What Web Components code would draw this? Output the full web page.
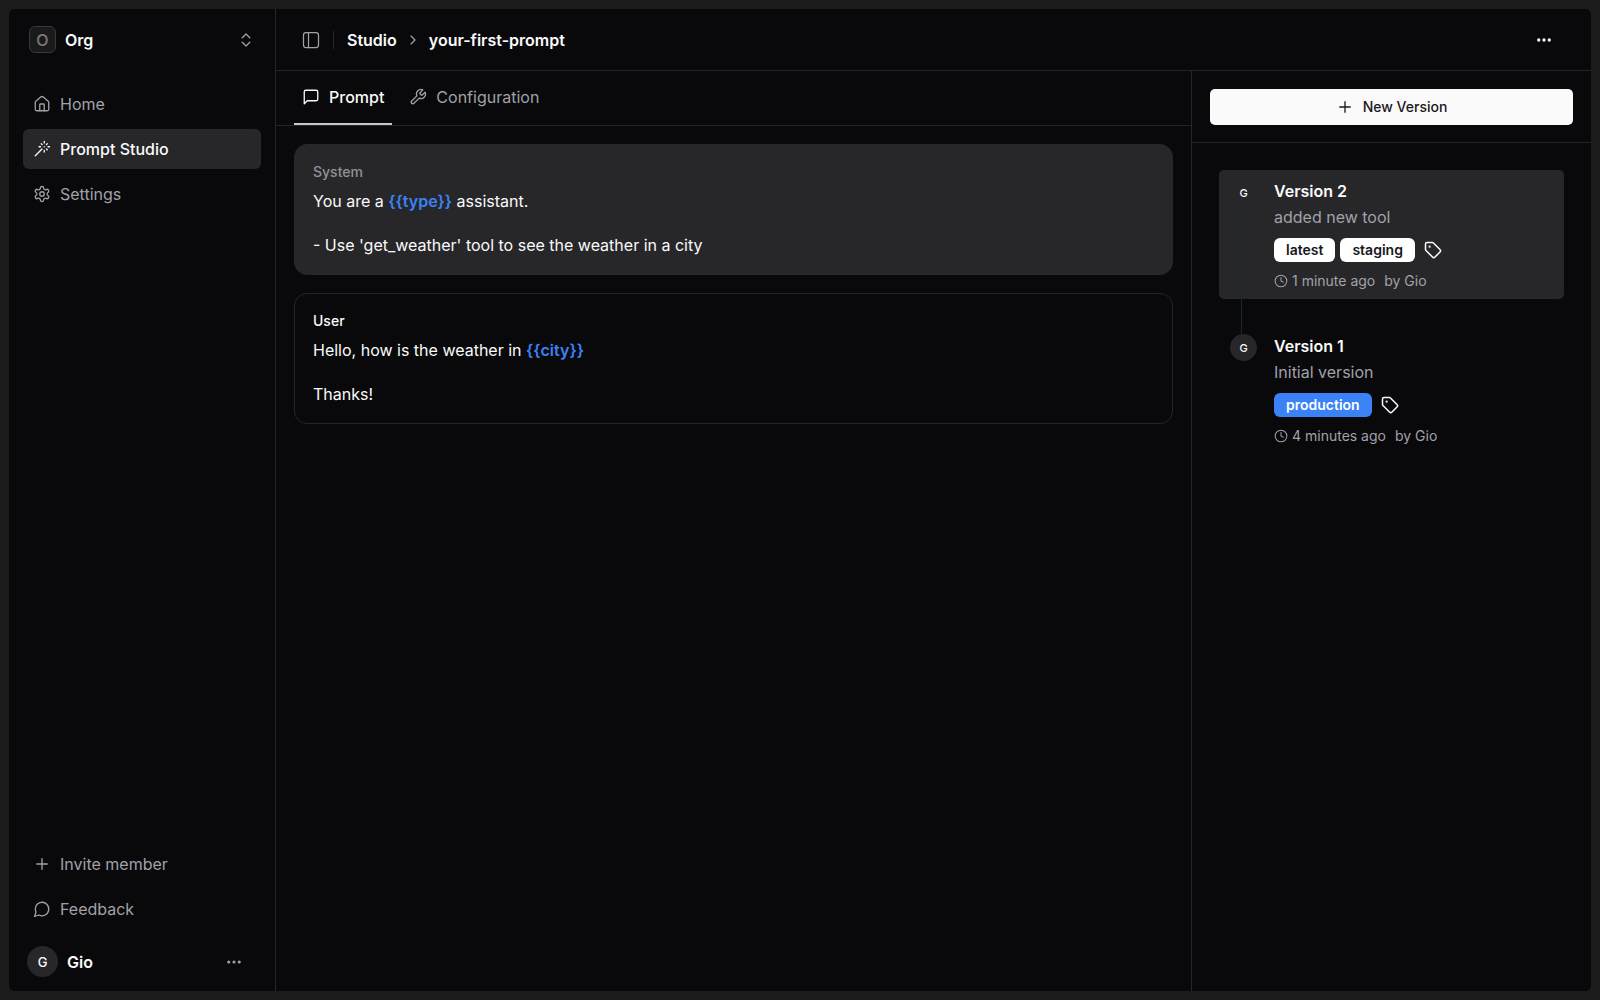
<!DOCTYPE html>
<html lang="en">
<head>
<meta charset="utf-8">
<title>your-first-prompt</title>
<style>
  :root {
    --bg: #09090b;
    --line: #252528;
    --raised: #27272a;
    --text: #fafafa;
    --muted: #a1a1aa;
    --blue: #3b82f6;
  }
  body {
    margin: 0;
    background: #1b1b1b;
    color: var(--text);
    font: 16px/22px Inter, "Liberation Sans", sans-serif;
  }
</style>
</head>
<body>

<studio-app>
  <side-bar slot="sidebar">
    <nav-link icon="home">Home</nav-link>
    <nav-link icon="wand" active>Prompt Studio</nav-link>
    <nav-link icon="settings">Settings</nav-link>
    <nav-link slot="bottom" icon="plus">Invite member</nav-link>
    <nav-link slot="bottom" icon="bubble">Feedback</nav-link>
  </side-bar>
  <page-header slot="header"></page-header>
  <tab-bar slot="main">
    <tab-item icon="message" active>Prompt</tab-item>
    <tab-item icon="wrench">Configuration</tab-item>
  </tab-bar>
  <message-list slot="main">
    <prompt-message role-name="System" filled>
      <p>You are a <prompt-var>type</prompt-var> assistant.</p>
      <p>- Use 'get_weather' tool to see the weather in a city</p>
    </prompt-message>
    <prompt-message role-name="User">
      <p>Hello, how is the weather in <prompt-var>city</prompt-var></p>
      <p>Thanks!</p>
    </prompt-message>
  </message-list>
  <version-panel slot="versions">
    <version-item name="Version 2" time="1 minute ago" author="Gio" active linked>
      added new tool
      <version-badge slot="badges">latest</version-badge>
      <version-badge slot="badges">staging</version-badge>
    </version-item>
    <version-item name="Version 1" time="4 minutes ago" author="Gio">
      Initial version
      <version-badge slot="badges" live>production</version-badge>
    </version-item>
  </version-panel>
</studio-app>

<script>
const icons = {
  home: '<path d="M15 21v-8a1 1 0 0 0-1-1h-4a1 1 0 0 0-1 1v8"/><path d="M3 10a2 2 0 0 1 .709-1.528l7-5.999a2 2 0 0 1 2.582 0l7 5.999A2 2 0 0 1 21 10v9a2 2 0 0 1-2 2H5a2 2 0 0 1-2-2z"/>',
  wand: '<path d="M15 4V2M15 16v-2M8 9h2M20 9h2M17.8 11.8 19 13M15 9h.01M17.8 6.2 19 5M3 21l9-9M12.2 6.2 11 5"/>',
  settings: '<path d="M12.22 2h-.44a2 2 0 0 0-2 2v.18a2 2 0 0 1-1 1.73l-.43.25a2 2 0 0 1-2 0l-.15-.08a2 2 0 0 0-2.73.73l-.22.38a2 2 0 0 0 .73 2.73l.15.1a2 2 0 0 1 1 1.72v.51a2 2 0 0 1-1 1.74l-.15.09a2 2 0 0 0-.73 2.73l.22.38a2 2 0 0 0 2.73.73l.15-.08a2 2 0 0 1 2 0l.43.25a2 2 0 0 1 1 1.73V20a2 2 0 0 0 2 2h.44a2 2 0 0 0 2-2v-.18a2 2 0 0 1 1-1.73l.43-.25a2 2 0 0 1 2 0l.15.08a2 2 0 0 0 2.73-.73l.22-.39a2 2 0 0 0-.73-2.73l-.15-.08a2 2 0 0 1-1-1.74v-.5a2 2 0 0 1 1-1.74l.15-.09a2 2 0 0 0 .73-2.73l-.22-.38a2 2 0 0 0-2.73-.73l-.15.08a2 2 0 0 1-2 0l-.43-.25a2 2 0 0 1-1-1.73V4a2 2 0 0 0-2-2z"/><circle cx="12" cy="12" r="3"/>',
  plus: '<path d="M5 12h14M12 5v14"/>',
  bubble: '<path d="M7.9 20A9 9 0 1 0 4 16.1L2 22Z"/>',
  message: '<path d="M21 15a2 2 0 0 1-2 2H7l-4 4V5a2 2 0 0 1 2-2h14a2 2 0 0 1 2 2z"/>',
  wrench: '<path d="M14.7 6.3a1 1 0 0 0 0 1.4l1.6 1.6a1 1 0 0 0 1.4 0l3.77-3.77a6 6 0 0 1-7.94 7.94l-6.91 6.91a2.12 2.12 0 0 1-3-3l6.91-6.91a6 6 0 0 1 7.94-7.94l-3.76 3.76z"/>',
  panel: '<rect x="3" y="3" width="18" height="18" rx="3"/><path d="M9 3v18"/>',
  chevron: '<path d="m9 18 6-6-6-6"/>',
  updown: '<path d="m7 15 5 5 5-5M7 9l5-5 5 5"/>',
  dots: '<g fill="currentColor"><circle cx="5" cy="12" r="1.2"/><circle cx="12" cy="12" r="1.2"/><circle cx="19" cy="12" r="1.2"/></g>',
  tag: '<path d="M12.586 2.586A2 2 0 0 0 11.172 2H4a2 2 0 0 0-2 2v7.172a2 2 0 0 0 .586 1.414l8.704 8.704a2.426 2.426 0 0 0 3.42 0l6.58-6.58a2.426 2.426 0 0 0 0-3.42z"/><circle cx="7.5" cy="7.5" r=".5" fill="currentColor"/>',
  clock: '<circle cx="12" cy="12" r="10"/><path d="M12 6v6l4 2"/>'
};

// shared by every element that holds a button or a link
const reset = `
  :host, * { box-sizing: border-box; }
  button, a {
    margin: 0; padding: 0; border: 0; background: none;
    color: inherit; font: inherit; text-decoration: none; cursor: pointer;
  }
  button { display: flex; align-items: center; }
`;

function define(name, css, html) {
  customElements.define(name, class extends HTMLElement {
    constructor() {
      super();
      this.attachShadow({ mode: 'open' });
    }
    connectedCallback() {
      this.shadowRoot.innerHTML = `<style>${reset}${css}</style>${html(this)}`;
    }
  });
}

define('app-icon', `
  :host { display: block; flex: none; width: 18px; height: 18px; }
  :host([size="14"]) { width: 14px; height: 14px; }
  :host([size="16"]) { width: 16px; height: 16px; }
  :host([size="20"]) { width: 20px; height: 20px; }
  svg { display: block; width: 100%; height: 100%; }
`, el => `<svg viewBox="0 0 24 24" fill="none" stroke="currentColor" stroke-width="${el.getAttribute('weight') || '1.75'}"
  stroke-linecap="round" stroke-linejoin="round" aria-hidden="true">${icons[el.getAttribute('name')]}</svg>`);

define('user-avatar', `
  :host {
    display: flex; flex: none; align-items: center; justify-content: center;
    width: 27px; height: 27px; border-radius: 50%;
    background: var(--raised); font-size: 11px; font-weight: 500;
  }
  :host([large]) { width: 31px; height: 31px; font-size: 13px; }
  :host([square]) {
    border: 1px solid #38383a; border-radius: 6px; background: #1a1a1b;
    color: #7b7b7e; font-size: 16px; font-weight: 500;
  }
`, () => `<slot></slot>`);

define('nav-link', `
  :host { display: block; color: var(--muted); }
  a { display: flex; align-items: center; gap: 9px; height: 40px; padding: 0 10px; border-radius: 6px; }
  :host([active]) a { background: var(--raised); color: var(--text); font-weight: 500; }
`, el => `<a href="#"><app-icon name="${el.getAttribute('icon')}"></app-icon><slot></slot></a>`);

define('side-bar', `
  :host {
    display: flex; flex-direction: column; width: 267px; flex: none;
    padding: 17px 14px 14px; border-right: 1px solid var(--line);
  }
  .org, .user { display: flex; align-items: center; width: 100%; font-weight: 600; }
  .org { gap: 9px; padding: 0 6px; }
  .user { gap: 9px; padding: 0 4px; margin-top: 17px; }
  .org span, .user span { flex: 1; text-align: left; }
  app-icon { color: var(--muted); }
  .user app-icon { margin-right: 14px; }
  nav { display: flex; flex-direction: column; gap: 5px; }
  .top { margin-top: 31px; flex: 1; }
`, () => `
  <button class="org"><user-avatar square>O</user-avatar><span>Org</span><app-icon name="updown"></app-icon></button>
  <nav class="top" aria-label="Main"><slot></slot></nav>
  <nav aria-label="Help"><slot name="bottom"></slot></nav>
  <button class="user"><user-avatar large>G</user-avatar><span>Gio</span><app-icon name="dots"></app-icon></button>
`);

define('page-header', `
  :host {
    display: flex; align-items: center; justify-content: space-between;
    height: 62px; padding: 0 38px 0 25px; border-bottom: 1px solid var(--line);
  }
  nav { display: flex; align-items: center; font-weight: 600; }
  .toggle { color: var(--muted); }
  .rule { width: 1px; height: 18px; margin: 0 13px 0 12px; background: var(--raised); }
  nav app-icon { margin: 0 8px; color: var(--muted); }
  nav .toggle app-icon { margin: 0; }
`, () => `
  <nav aria-label="Breadcrumb">
    <button class="toggle" aria-label="Toggle sidebar"><app-icon name="panel" size="20" weight="1.5"></app-icon></button>
    <div class="rule"></div>
    <a href="#">Studio</a>
    <app-icon name="chevron" size="16"></app-icon>
    <a href="#" aria-current="page">your-first-prompt</a>
  </nav>
  <button aria-label="More"><app-icon name="dots" weight="2"></app-icon></button>
`);

define('tab-item', `
  :host { display: flex; color: var(--muted); }
  button { gap: 9px; padding: 0 8px; border-bottom: 2px solid transparent; }
  :host([active]) { color: var(--text); font-weight: 500; }
  :host([active]) button { border-color: #c8c8c8; }
`, el => `<button role="tab" aria-selected="${el.hasAttribute('active')}"><app-icon name="${el.getAttribute('icon')}"></app-icon><slot></slot></button>`);

define('tab-bar', `
  :host { display: block; padding: 0 18px; border-bottom: 1px solid var(--line); }
  div { display: flex; gap: 9px; height: 54px; }
`, () => `<div role="tablist"><slot></slot></div>`);

define('message-list', `
  :host { display: flex; flex-direction: column; gap: 18px; padding: 18px; }
`, () => `<slot></slot>`);

define('prompt-var', `
  :host { color: var(--blue); font-weight: 600; }
`, () => `{{<slot></slot>}}`);

define('prompt-message', `
  :host { display: block; padding: 16px 18px 18px; border: 1px solid var(--line); border-radius: 13px; }
  :host([filled]) { background: var(--raised); border-color: var(--raised); }
  h2 { margin: 0 0 7px; font-size: 14px; line-height: 22px; font-weight: 500; }
  :host([filled]) h2 { color: #919198; }
  .body { display: flex; flex-direction: column; gap: 22px; }
  ::slotted(p) { margin: 0; }
`, el => `<h2>${el.getAttribute('role-name')}</h2><div class="body"><slot></slot></div>`);

define('version-badge', `
  :host {
    display: block; padding: 0 12px; border-radius: 6px; background: #fff;
    color: #18181b; font-size: 14px; line-height: 24px; font-weight: 600;
  }
  :host([live]) { background: var(--blue); color: #fff; }
`, () => `<slot></slot>`);

define('version-item', `
  :host { display: flex; gap: 17px; padding: 9px 11px 8px; border-radius: 5px; }
  :host([active]) { background: var(--raised); }
  .rail { display: flex; flex-direction: column; }
  /* runs on past the card to the next avatar */
  .link { flex: 1; width: 1px; margin: 0 0 -43px 11px; background: #162b2b; }
  .info { flex: 1; line-height: 24px; }
  h3 { margin: 0 0 2px; font-size: 16px; font-weight: 600; }
  p { margin: 0; color: var(--muted); }
  .badges { display: flex; align-items: center; gap: 5px; margin: 9px 0; }
  .badges button { margin-left: 4px; }
  .meta { display: flex; align-items: center; color: var(--muted); font-size: 14px; line-height: 20px; }
  time { margin: 0 9px 0 4px; }
`, el => `
  <div class="rail"><user-avatar>G</user-avatar>${el.hasAttribute('linked') ? '<div class="link"></div>' : ''}</div>
  <div class="info">
    <h3>${el.getAttribute('name')}</h3>
    <p><slot></slot></p>
    <div class="badges"><slot name="badges"></slot><button aria-label="Edit labels"><app-icon name="tag" weight="2"></app-icon></button></div>
    <div class="meta"><app-icon name="clock" size="14"></app-icon><time>${el.getAttribute('time')}</time><span>by ${el.getAttribute('author')}</span></div>
  </div>
`);

define('version-panel', `
  :host { display: block; }
  .new { padding: 18px 18px 17px; border-bottom: 1px solid var(--line); }
  .new button {
    justify-content: center; gap: 9px; width: 100%; height: 36px; border-radius: 5px;
    background: var(--text); color: #18181b; font-size: 14px; font-weight: 500;
  }
  .list { display: flex; flex-direction: column; gap: 26px; padding: 27px; }
`, () => `
  <div class="new"><button><app-icon name="plus"></app-icon>New Version</button></div>
  <div class="list"><slot></slot></div>
`);

define('studio-app', `
  :host { display: flex; min-height: 100vh; padding: 9px; }
  .frame { display: flex; flex: 1; border-radius: 5px; background: var(--bg); }
  .page { display: flex; flex-direction: column; flex: 1; min-width: 0; }
  .split { display: flex; flex: 1; }
  main { flex: 1; min-width: 0; }
  aside { width: 400px; border-left: 1px solid var(--line); }
`, () => `
  <div class="frame">
    <slot name="sidebar"></slot>
    <div class="page">
      <slot name="header"></slot>
      <div class="split">
        <main><slot name="main"></slot></main>
        <aside><slot name="versions"></slot></aside>
      </div>
    </div>
  </div>
`);
</script>
</body>
</html>
